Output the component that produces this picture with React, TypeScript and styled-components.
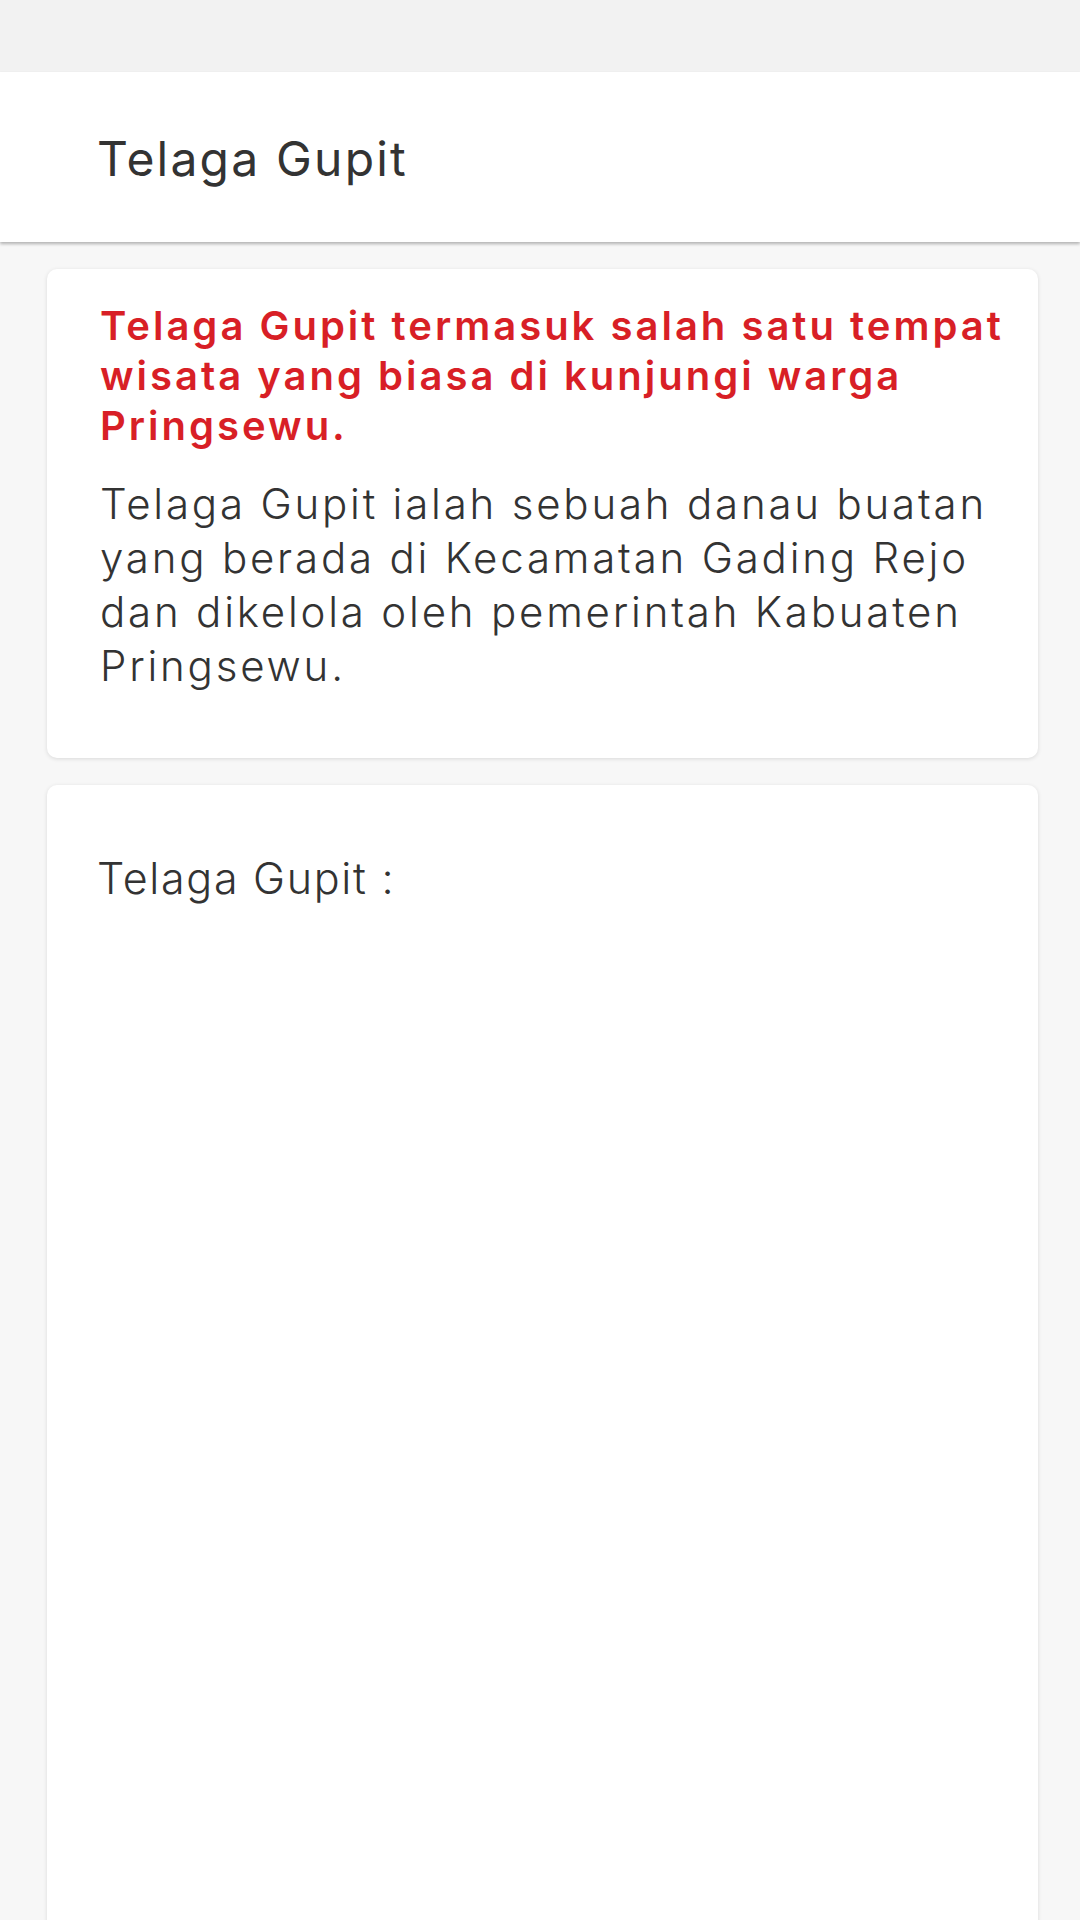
import React from 'react';
import styled, { createGlobalStyle } from 'styled-components';

const GlobalStyle = createGlobalStyle`
  html, body {
    margin: 0;
    padding: 0;
    background: #f7f7f7;
    font-family: Inter, 'Open Sans', sans-serif;
  }
`;

const Page = styled('div')`
  width: 1080px;
  min-height: 1920px;
  overflow: hidden;
  background: #f7f7f7;
`;

const StatusBar = styled('div')`
  height: 72px;
  background: #f2f2f2;
`;

const Header = styled('header')`
  height: 170px;
  background: #fff;
  display: flex;
  align-items: center;
  padding-left: 97px;
  box-shadow: 0 2px 3px rgba(0, 0, 0, 0.28);
  position: relative;
`;

const HeaderTitle = styled('h1')`
  margin: 2px 0 0;
  font-size: 48px;
  font-weight: 400;
  letter-spacing: 2.2px;
  color: #333;
`;

const Content = styled('main')`
  display: flex;
  flex-direction: column;
  gap: 27px;
  padding: 27px 42px 0 47px;
`;

const Card = styled('section')<{ $height?: number }>`
  background: #fff;
  border-radius: 10px;
  box-shadow: 0 1px 4px rgba(0, 0, 0, 0.12);
  height: ${(p) => (p.$height ? `${p.$height}px` : 'auto')};
  box-sizing: border-box;
`;

const IntroBody = styled('div')`
  padding: 32px 10px 0 53px;
`;

const Lead = styled('h2')`
  margin: 0;
  font-size: 40px;
  line-height: 50px;
  font-weight: 600;
  letter-spacing: 3px;
  color: #d81f26;
`;

const Paragraph = styled('p')`
  margin: 26px 0 0;
  padding-right: 20px;
  font-size: 42px;
  line-height: 54px;
  font-weight: 300;
  letter-spacing: 2.8px;
  color: #333;
`;

const GalleryLabel = styled('p')`
  margin: 0;
  padding: 67px 0 0 50px;
  font-size: 43px;
  font-weight: 300;
  letter-spacing: 1.7px;
  color: #333;
`;

export default function App() {
  return (
    <Page>
      <GlobalStyle />
      <StatusBar />
      <Header>
        <HeaderTitle>Telaga Gupit</HeaderTitle>
      </Header>
      <Content>
        <Card $height={489}>
          <IntroBody>
            <Lead>Telaga Gupit termasuk salah satu tempat wisata yang biasa di kunjungi warga Pringsewu.</Lead>
            <Paragraph>
              Telaga Gupit ialah sebuah danau buatan yang berada di Kecamatan Gading Rejo dan dikelola oleh
              pemerintah Kabuaten Pringsewu.
            </Paragraph>
          </IntroBody>
        </Card>
        <Card $height={1200}>
          <GalleryLabel>Telaga Gupit :</GalleryLabel>
        </Card>
      </Content>
    </Page>
  );
}
